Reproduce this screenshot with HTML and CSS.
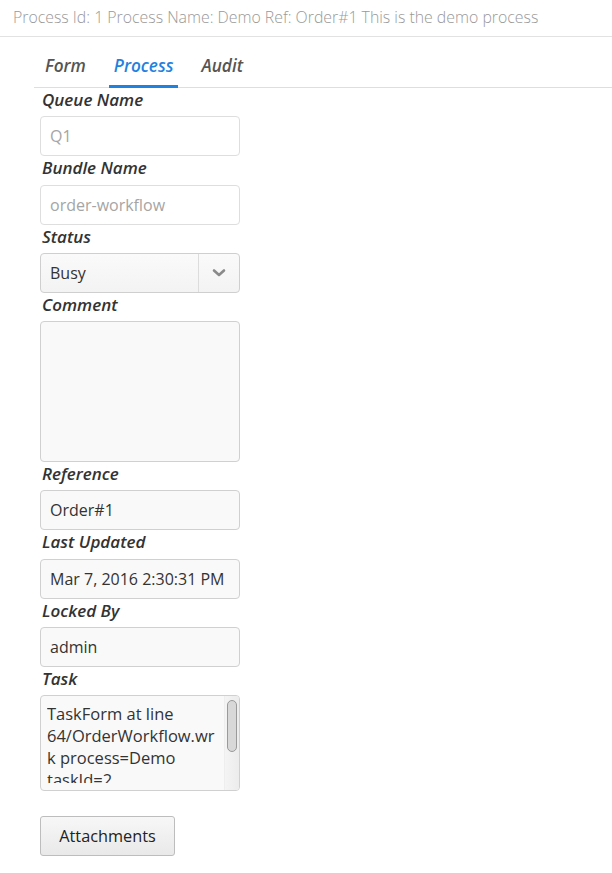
FILE: index.html
```html
<!DOCTYPE html>
<html>
<head>
<meta charset="utf-8">
<link rel="stylesheet" href="styles.css">
</head>
<body>
<div class="header">Process Id: 1 Process Name: Demo Ref: Order#1 This is the demo process</div>
<div class="tabs">
  <div class="tab">Form</div>
  <div class="tab active">Process</div>
  <div class="tab">Audit</div>
</div>
<div class="form">
  <div class="label">Queue Name</div>
  <div class="field plain muted">Q1</div>
  <div class="label">Bundle Name</div>
  <div class="field plain muted">order-workflow</div>
  <div class="label">Status</div>
  <div class="field select">
    <span class="select-value">Busy</span>
    <span class="select-btn">
      <svg width="14" height="10" viewBox="0 0 14 10"><path d="M2 2.5 L7 7 L12 2.5" fill="none" stroke="#8a8a8a" stroke-width="2.6" stroke-linecap="round" stroke-linejoin="round"/></svg>
    </span>
  </div>
  <div class="label">Comment</div>
  <div class="field area"></div>
  <div class="label">Reference</div>
  <div class="field">Order#1</div>
  <div class="label">Last Updated</div>
  <div class="field">Mar 7, 2016 2:30:31 PM</div>
  <div class="label">Locked By</div>
  <div class="field">admin</div>
  <div class="label">Task</div>
  <div class="field task">
    <div class="task-text">TaskForm at line 64/OrderWorkflow.wrk process=Demo taskId=2</div>
    <div class="scrollbar"><div class="thumb"></div></div>
  </div>
  <button class="btn">Attachments</button>
</div>
</body>
</html>
```
FILE: styles.css
```css
html, body {
  margin: 0;
  padding: 0;
  background: #fff;
  font-family: "Open Sans", "DejaVu Sans", sans-serif;
  font-size: 16px;
  color: #333;
}
.header {
  height: 36px;
  line-height: 34px;
  padding-left: 13px;
  color: #999;
  font-size: 15.85px;
  font-weight: 300;
  border-bottom: 1px solid #e2e2e2;
  white-space: nowrap;
}
.tabs {
  display: flex;
  margin-left: 34px;
  height: 50px;
  border-bottom: 1px solid #dedede;
  gap: 18px;
  padding-left: 6px;
}
.tab {
  padding: 0 5px;
  line-height: 58px;
  height: 49px;
  font-size: 17.2px;
  font-style: italic;
  font-weight: 600;
  color: #555;
  box-sizing: border-box;
}
.tab.active {
  color: #1e82e0;
  border-bottom: 3px solid #1e82e0;
  height: 51px;
}
.form {
  padding-left: 40px;
  display: flex;
  flex-direction: column;
  align-items: flex-start;
}
.label {
  font-size: 17px;
  font-style: italic;
  font-weight: 600;
  color: #333;
  line-height: 20px;
  height: 20px;
  margin: 2px 0 6.29px 2px;
}
.field {
  box-sizing: border-box;
  width: 200px;
  height: 40px;
  border: 1px solid #d0d0d0;
  border-radius: 4px;
  background: #f9f9f9;
  padding: 0 9px;
  line-height: 38px;
  color: #333;
  white-space: nowrap;
}
.field.plain {
  background: #fff;
  border-color: #dedede;
}
.field.muted {
  color: #a5a5a5;
}
.field.select {
  display: flex;
  padding: 0 0 0 9px;
  background: linear-gradient(#fafafa, #f3f3f3);
  border-color: #cfcfcf;
}
.select-value {
  flex: 1;
}
.select-btn {
  width: 40px;
  border-left: 1px solid #dcdcdc;
  display: flex;
  align-items: center;
  justify-content: center;
}
.field.area {
  height: 141px;
}
.field.task {
  height: 96px;
  position: relative;
  overflow: hidden;
  padding: 0 0 0 6px;
  white-space: normal;
}
.task-text {
  box-sizing: border-box;
  width: 176px;
  height: 87px;
  overflow: hidden;
  font-size: 16.5px;
  overflow-wrap: anywhere;
  line-height: 22px;
  padding-top: 7px;
}
.scrollbar {
  position: absolute;
  top: 0;
  right: 0;
  width: 14px;
  height: 100%;
  background: linear-gradient(90deg, #f4f4f4, #ececec);
  border-left: 1px solid #eee;
}
.thumb {
  position: absolute;
  top: 4px;
  left: 2px;
  width: 8px;
  height: 50px;
  border: 1px solid #9a9a9a;
  border-radius: 5px;
  background: #d8d8d8;
}
.btn {
  margin-top: 25px;
  width: 135px;
  height: 40px;
  border: 1px solid #bdbdbd;
  border-radius: 3px;
  background: linear-gradient(#f7f7f7, #e9e9e9);
  font-family: "Open Sans", "DejaVu Sans", sans-serif;
  font-size: 16.3px;
  color: #222;
  padding: 0;
}
```
